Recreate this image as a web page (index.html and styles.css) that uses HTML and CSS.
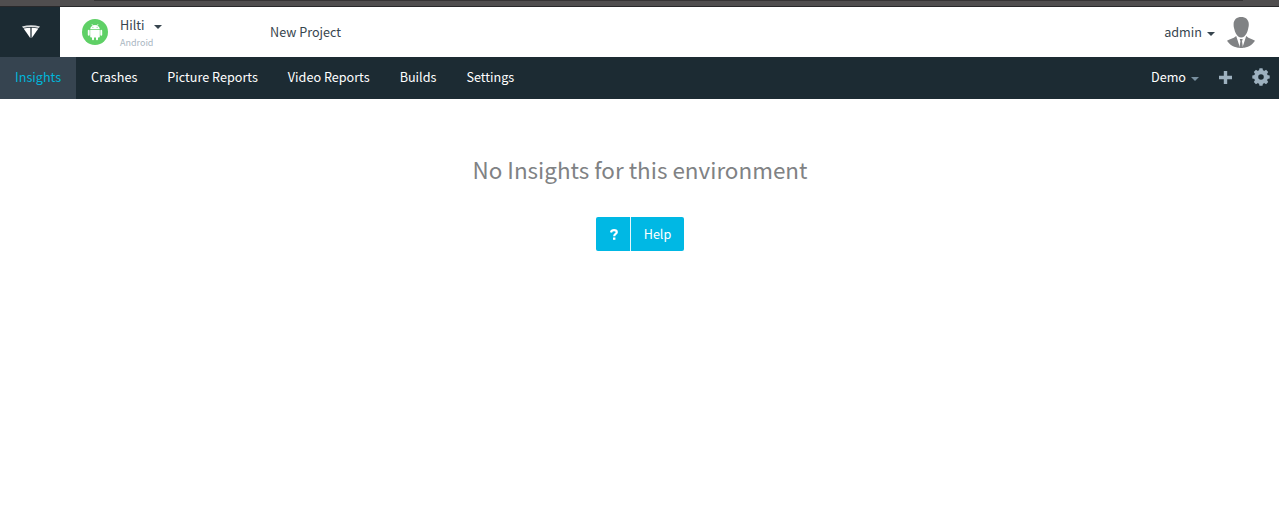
FILE: index.html
```html
<!DOCTYPE html>
<html lang="en">
<head>
<meta charset="utf-8">
<title>Insights</title>
<link rel="stylesheet" href="styles.css">
</head>
<body>
<div class="browser-edge"><div class="browser-field"></div></div>
<header class="header">
  <a class="brand">
    <svg width="18" height="14" viewBox="0 0 18 14" fill="#fff"><path d="M0 1.500Q9-1 18 1.500L16.800 3Q9 .8 1.200 3Z" opacity=".85"/><path d="M1.600 3.600Q5 2.800 8.400 2.800V13.300Z"/><path d="M16.400 3.600Q13 2.800 9.600 2.800V13.300Z"/></svg>
  </a>
  <div class="project">
    <svg class="android" width="26" height="26" viewBox="0 0 26 26"><circle cx="13" cy="13" r="13" fill="#5fd066"/><g fill="#fff"><path d="M8.200 10.200C8.400 7.800 10.300 6 13 6s4.600 1.800 4.800 4.200z"/><path d="M9.800 5l1.400 2M16.200 5l-1.400 2" stroke="#fff" stroke-width=".7"/><path d="M8.200 10.900h9.600v6.600q0 1-1 1H9.200q-1 0-1-1z"/><rect x="5.800" y="10.800" width="1.900" height="6" rx=".95"/><rect x="18.300" y="10.800" width="1.900" height="6" rx=".95"/><rect x="10" y="17" width="2" height="4.300" rx="1"/><rect x="14" y="17" width="2" height="4.300" rx="1"/></g><circle cx="10.900" cy="8.300" r=".5" fill="#5fd066"/><circle cx="15.100" cy="8.300" r=".5" fill="#5fd066"/></svg>
    <div class="project-text">
      <div class="project-name">Hilti <i class="caret"></i></div>
      <div class="platform">Android</div>
    </div>
  </div>
  <a class="new-project">New Project</a>
  <div class="user">
    <span>admin</span><i class="caret"></i>
    <svg class="avatar" width="28" height="32" viewBox="0 0 28 32"><g fill="#808284"><path d="M14.200 0C18.500 0 21.800 2.500 21.800 7.300c0 2.200-.3 3-.7 4.700-.6 3-2 5.800-3.900 7.400-1.800 1.500-4.300 1.500-6 0-1.900-1.600-3.300-4.400-3.900-7.400-.5-1.700-.7-2.500-.7-4.700C6.600 2.500 9.900 0 14.200 0z"/><path d="M9.200 19L13 30.800C7.500 30.800 3 28 0 23.700c2.200-1.500 6.300-2 9.200-4.700zM19.200 19L15.400 30.800C20.700 30.800 25 28 28 23.700c-2.200-1.500-6.100-2-8.800-4.700z"/><path d="M12.700 22h3l-.7 2.200 1 6.800h-3.600l1-6.800z"/></g></svg>
  </div>
</header>
<nav class="nav">
  <a class="tab tab-active">Insights</a><a class="tab">Crashes</a><a class="tab">Picture Reports</a><a class="tab">Video Reports</a><a class="tab">Builds</a><a class="tab">Settings</a>
  <div class="tools">
    <span>Demo</span><i class="caret caret-muted"></i>
    <svg class="plus" width="13" height="13" viewBox="0 0 13 13"><path d="M4.800 0h3.400v4.800H13v3.400H8.200V13H4.800V8.200H0V4.800h4.800z" fill="#9db1bf"/></svg>
    <svg class="gear" width="18" height="18" viewBox="-9 -9 18 18"><g fill="#9db1bf"><path fill-rule="evenodd" d="M0-6.900a6.900 6.900 0 1 0 0 13.800a6.900 6.900 0 1 0 0-13.800zM0-2.800a2.800 2.800 0 1 1 0 5.600a2.800 2.800 0 1 1 0-5.600z"/><path id="tooth" d="M-2.100-6L-1.500-8.700H1.500L2.100-6z"/><use href="#tooth" transform="rotate(45)"/><use href="#tooth" transform="rotate(90)"/><use href="#tooth" transform="rotate(135)"/><use href="#tooth" transform="rotate(180)"/><use href="#tooth" transform="rotate(225)"/><use href="#tooth" transform="rotate(270)"/><use href="#tooth" transform="rotate(315)"/></g></svg>
  </div>
</nav>
<main class="empty">
  <h1 class="message">No Insights for this environment</h1>
  <a class="help"><span class="help-icon"><svg width="8" height="11" viewBox="0 0 8 11"><path d="M1 3.500C1.300 2 2.400 1.200 4 1.200c1.700 0 2.800.8 2.800 2.100C6.800 5 4.200 5 4.200 7.200" fill="none" stroke="#fff" stroke-width="2.200"/><rect x="3" y="8.500" width="2.400" height="2.300" fill="#fff"/></svg></span><span class="help-label">Help</span></a>
</main>
</body>
</html>
```
FILE: styles.css
```css
* { box-sizing: border-box; }
body {
  margin: 0;
  background: #fff;
  color: #37454e;
  font: 12.64px/20px "Noto Sans CJK SC", "Noto Sans", sans-serif;
  overflow: hidden;
}
svg { display: block; flex: none; }
.browser-edge { height: 7px; background: #504e4f; border-bottom: 1px solid #29292b; }
.browser-field { height: 1px; margin: 0 36px 0 94px; background: #363435; }
.header { display: flex; height: 50px; }
.brand { width: 60px; background: #1c2b33; display: flex; align-items: center; justify-content: center; padding-left: 2px; }
.project { display: flex; width: 210px; padding: 12px 0 0 22px; }
.project-text { padding-left: 12px; }
.project-name { display: flex; align-items: center; height: 14px; line-height: 18px; padding-bottom: 2px; }
.project-name .caret { margin-left: 10px; margin-top: 4px; }
.platform { margin-top: 4px; font-size: 9px; line-height: 12px; color: #a9b6bf; }
.caret { border: 4px solid transparent; border-top-color: currentColor; border-bottom: 0; }
.caret-muted { color: #7890a0; }
.new-project { line-height: 49px; }
.user { margin-left: auto; display: flex; align-items: center; padding-right: 24px; }
.user .caret { margin: 3px 0 0 5px; }
.avatar { margin: 2px 0 0 12px; }
.nav { display: flex; height: 42px; background: #1c2b33; color: #fff; line-height: 39px; }
.tab { padding: 0 15px; }
.tab-active { background: #364450; color: #00b5da; }
.tools { margin-left: auto; display: flex; align-items: center; padding: 0 9px 1px 0; }
.tools span { padding-bottom: 2px; line-height: 38px; }
.tools .caret { margin: 3px 0 0 5px; }
.plus { margin: -1px 0 0 20px; }
.gear { margin: -1px 0 0 20px; }
.empty { display: flex; flex-direction: column; align-items: center; padding: 54px 0 0 1px; }
.message { margin: 0; font-size: 22.45px; line-height: 32px; font-weight: 400; color: #808284; }
.help { display: flex; margin-top: 32px; height: 34px; border-radius: 2px; background: #00b8e4; color: #fff; line-height: 34px; }
.help-icon { width: 35px; display: flex; align-items: center; justify-content: center; border-right: 1px solid #e5f7fc; padding-left: 2px; }
.help-label { width: 53px; text-align: center; }
```
